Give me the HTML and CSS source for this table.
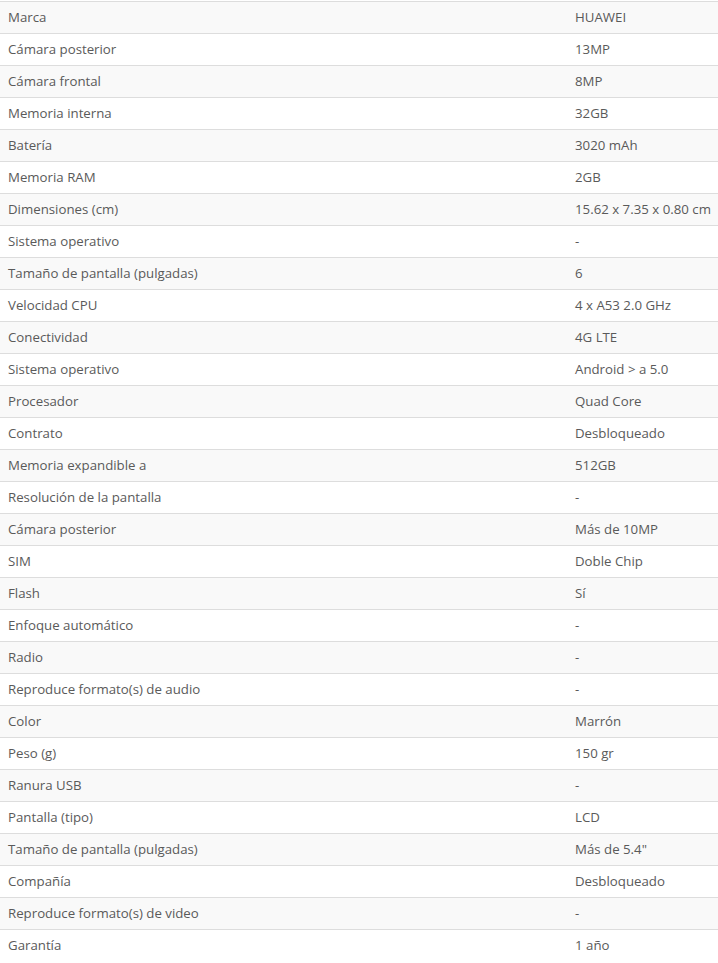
FILE: index.html
```html
<!DOCTYPE html>
<html lang="es">
<head>
<meta charset="utf-8">
<link rel="stylesheet" href="styles.css">
</head>
<body>
<table class="specs">
<tbody>
<tr><td>Marca</td><td>HUAWEI</td></tr>
<tr><td>Cámara posterior</td><td>13MP</td></tr>
<tr><td>Cámara frontal</td><td>8MP</td></tr>
<tr><td>Memoria interna</td><td>32GB</td></tr>
<tr><td>Batería</td><td>3020 mAh</td></tr>
<tr><td>Memoria RAM</td><td>2GB</td></tr>
<tr><td>Dimensiones (cm)</td><td>15.62 x 7.35 x 0.80 cm</td></tr>
<tr><td>Sistema operativo</td><td>-</td></tr>
<tr><td>Tamaño de pantalla (pulgadas)</td><td>6</td></tr>
<tr><td>Velocidad CPU</td><td>4 x A53 2.0 GHz</td></tr>
<tr><td>Conectividad</td><td>4G LTE</td></tr>
<tr><td>Sistema operativo</td><td>Android &gt; a 5.0</td></tr>
<tr><td>Procesador</td><td>Quad Core</td></tr>
<tr><td>Contrato</td><td>Desbloqueado</td></tr>
<tr><td>Memoria expandible a</td><td>512GB</td></tr>
<tr><td>Resolución de la pantalla</td><td>-</td></tr>
<tr><td>Cámara posterior</td><td>Más de 10MP</td></tr>
<tr><td>SIM</td><td>Doble Chip</td></tr>
<tr><td>Flash</td><td>Sí</td></tr>
<tr><td>Enfoque automático</td><td>-</td></tr>
<tr><td>Radio</td><td>-</td></tr>
<tr><td>Reproduce formato(s) de audio</td><td>-</td></tr>
<tr><td>Color</td><td>Marrón</td></tr>
<tr><td>Peso (g)</td><td>150 gr</td></tr>
<tr><td>Ranura USB</td><td>-</td></tr>
<tr><td>Pantalla (tipo)</td><td>LCD</td></tr>
<tr><td>Tamaño de pantalla (pulgadas)</td><td>Más de 5.4"</td></tr>
<tr><td>Compañía</td><td>Desbloqueado</td></tr>
<tr><td>Reproduce formato(s) de video</td><td>-</td></tr>
<tr><td>Garantía</td><td>1 año</td></tr>
</tbody>
</table>
</body>
</html>
```
FILE: styles.css
```css
html, body {
  margin: 0;
  padding: 0;
  background: #fff;
}
body {
  padding-top: 1px;
}
.specs {
  width: 718px;
  border-collapse: collapse;
  table-layout: fixed;
  font-family: "Open Sans", "Liberation Sans", sans-serif;
  font-size: 13.25px;
  color: #5a5a5a;
}
.specs td {
  height: 29px;
  padding: 0 8px 2px;
  border-top: 1px solid #ddd;
  vertical-align: middle;
  line-height: 18px;
  white-space: nowrap;
}
.specs td:first-child {
  width: 551px;
}
.specs tr:nth-child(odd) td {
  background: #f9f9f9;
}
```
